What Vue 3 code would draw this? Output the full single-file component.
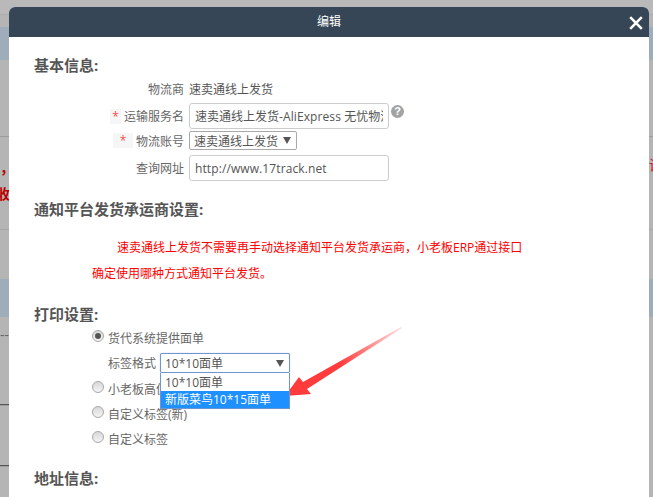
<script setup>
const bgMarks = [
  { text: '，', cls: 'm-comma' },
  { text: '收', cls: 'm-shou' },
  { text: '---', cls: 'm-dash' },
  { text: '一义', cls: 'm-yi' },
  { text: '一任', cls: 'm-ren' },
  { text: '调', cls: 'm-right' },
]
const extraRadios = [
  { label: '小老板高仿真标签', cls: 'r2' },
  { label: '自定义标签(新)', cls: 'r3' },
  { label: '自定义标签', cls: 'r4' },
]
</script>

<template>
  <div class="page">
    <div class="backdrop">
      <div class="strip top"></div>
      <div class="strip blue first"></div>
      <div class="strip line l1"></div>
      <div class="strip line l2"></div>
      <div class="strip blue second"></div>
      <span v-for="m in bgMarks" :key="m.cls" class="mark" :class="m.cls">{{ m.text }}</span>
    </div>

    <section class="modal">
      <header class="head">
        <span class="title">编辑</span>
        <svg class="close" viewBox="0 0 14 14" width="14" height="14">
          <path d="M1.2 1.2 L12.8 12.8 M12.8 1.2 L1.2 12.8" stroke="#fff" stroke-width="2.6" fill="none" />
        </svg>
      </header>

      <div class="body">
        <h3 class="h h1">基本信息:</h3>

        <div class="row info">
          <div class="lab">物流商</div>
          <div class="val">速卖通线上发货</div>
        </div>
        <div class="row svc">
          <div class="lab"><span class="star s1">*</span>运输服务名</div>
          <div class="ctl">
            <div class="input"><div class="clip">速卖通线上发货<span class="latin">-AliExpress </span>无忧物流-标准</div></div>
            <span class="help">?</span>
          </div>
        </div>
        <div class="row acct">
          <div class="lab"><span class="star s2">*</span>物流账号</div>
          <div class="select small">
            <span>速卖通线上发货</span>
            <svg class="tri" viewBox="0 0 8 7" width="8" height="7"><path d="M0 0H8L4 7Z" fill="#555" /></svg>
          </div>
        </div>
        <div class="row url">
          <div class="lab">查询网址</div>
          <div class="input"><div class="clip latin">http://www.17track.net</div></div>
        </div>

        <h3 class="h h2">通知平台发货承运商设置:</h3>
        <p class="red r-a">速卖通线上发货不需要再手动选择通知平台发货承运商，小老板ERP通过接口</p>
        <p class="red r-b">确定使用哪种方式通知平台发货。</p>

        <h3 class="h h3">打印设置:</h3>
        <div class="radio-row r1"><span class="radio on"></span>货代系统提供面单</div>
        <div class="fmt">
          <span class="fmt-lab">标签格式</span>
          <div class="dd">
            <div class="select focus">
              <span>10*10面单</span>
              <svg class="tri" viewBox="0 0 8 7" width="8" height="7"><path d="M0 0H8L4 7Z" fill="#555" /></svg>
            </div>
            <div class="menu">
              <div class="opt first-opt">10*10面单</div>
              <div class="opt sel">新版菜鸟10*15面单</div>
            </div>
          </div>
        </div>
        <div v-for="r in extraRadios" :key="r.cls" class="radio-row" :class="r.cls">
          <span class="radio"></span>{{ r.label }}
        </div>

        <h3 class="h h4">地址信息:</h3>
      </div>
    </section>

    <svg class="arrow" viewBox="0 0 653 497" width="653" height="497">
      <defs>
        <linearGradient id="fade" x1="402" y1="327" x2="340" y2="365" gradientUnits="userSpaceOnUse">
          <stop offset="0" stop-color="#ff3b3b" stop-opacity="0.15" />
          <stop offset="1" stop-color="#ff3b3b" />
        </linearGradient>
      </defs>
      <path d="M285 396 L299 377 L303 382 L401 327 L402 328 L307 389 L311 394 Z" fill="url(#fade)" />
    </svg>
  </div>
</template>

<style>
html, body { margin: 0; background: #b5b5b5; overflow: hidden; }
</style>

<style scoped>
.page {
  position: relative;
  width: 653px;
  height: 497px;
  overflow: hidden;
  font-family: "Open Sans", "Noto Sans CJK SC", sans-serif;
  font-size: 12px;
  color: #666;
}
.backdrop { position: absolute; inset: 0; background: #b5b5b5; }
.strip { position: absolute; left: 0; right: 0; }
.top { top: 0; height: 14px; background: #b9b9b9; border-bottom: 1px solid #adadad; }
.blue { background: #9eadb9; }
.first { top: 27px; height: 33px; }
.second { top: 279px; height: 38px; }
.line { height: 1px; background: #9c9c9c; }
.l1 { top: 136px; }
.l2 { top: 229px; background: #a6a6a6; }
.mark { position: absolute; font-size: 14px; line-height: 16px; white-space: nowrap; }
.m-comma { left: 0; top: 160px; color: #b80000; font-weight: 700; }
.m-shou { left: -4px; top: 186px; color: #b80000; font-weight: 700; }
.m-dash { left: 0; top: 327px; color: #666; }
.m-yi { left: -4px; top: 397px; color: #555; }
.m-ren { left: -4px; top: 458px; color: #555; }
.m-right { left: 649px; top: 157px; color: #c02020; }

.modal {
  position: absolute;
  left: 9px;
  top: 7px;
  width: 640px;
  height: 490px;
  background: #fff;
  border-radius: 6px 6px 0 0;
  overflow: hidden;
}
.head {
  position: relative;
  height: 30px;
  background: #374656;
  display: flex;
  align-items: center;
  justify-content: center;
}
.title { color: #fff; font-size: 12px; line-height: 30px; }
.close { position: absolute; right: 6px; top: 9px; }

.body { padding: 18px 0 0 25px; }
.h {
  margin: 0;
  font-size: 15px;
  line-height: 20px;
  font-weight: 700;
  color: #555;
}
.h2 { margin-top: 18px; }
.h3 { margin-top: 20px; }
.h4 { margin-top: 20px; }

.row { display: grid; grid-template-columns: 150px 1fr; column-gap: 5px; align-items: center; }
.lab { display: flex; justify-content: flex-end; align-items: center; color: #666; white-space: nowrap; }
.info { margin-top: 5px; height: 18px; }
.val { color: #555; }
.svc { margin-top: 5px; height: 26px; }
.acct { margin-top: 2px; height: 19px; }
.url { margin-top: 5px; height: 26px; }
.ctl { display: flex; align-items: flex-start; height: 100%; }

.star {
  background: #f6f6f6;
  color: #f05050;
  text-align: center;
  height: 15px;
  line-height: 16px;
  margin-right: 3px;
}
.s1 { width: 11px; }
.s2 { width: 20px; }

.input {
  box-sizing: border-box;
  width: 200px;
  height: 26px;
  border: 1px solid #ccc;
  border-radius: 3px;
  background: #fff;
  padding: 0 5px;
  line-height: 26px;
  font-size: 12px;
  color: #555;
}
.clip { white-space: nowrap; overflow: hidden; }
.latin { letter-spacing: 0.1px; }
.help {
  width: 13px;
  height: 13px;
  margin: 2px 0 0 2px;
  border-radius: 50%;
  background: #a3a3a3;
  color: #fff;
  font-family: "Liberation Sans", sans-serif;
  font-size: 11px;
  font-weight: 700;
  line-height: 13px;
  text-align: center;
}

.select {
  box-sizing: border-box;
  display: flex;
  align-items: center;
  justify-content: space-between;
  border: 1px solid #a9a9a9;
  border-radius: 2px;
  background: #fff;
  color: #555;
  padding: 0 5px 0 4px;
  white-space: nowrap;
}
.small { width: 108px; height: 19px; }
.focus {
  width: 130px;
  height: 20px;
  border: 1px solid #6f95d0;
  box-shadow: 0 0 1px #7ea6e0;
}

.red { margin: 0; color: #f00; line-height: 20px; white-space: nowrap; }
.r-a { margin-top: 19px; padding-left: 83px; }
.r-b { margin-top: 6px; padding-left: 58px; }

.radio-row {
  display: flex;
  align-items: center;
  height: 18px;
  padding-left: 58px;
  color: #666;
  white-space: nowrap;
}
.r1 { margin-top: 5px; }
.r2 { margin-top: 7px; }
.r3 { margin-top: 7px; }
.r4 { margin-top: 7px; }
.radio {
  box-sizing: border-box;
  width: 12px;
  height: 12px;
  margin-right: 4px;
  margin-bottom: 5px;
  border-radius: 50%;
  border: 1px solid #a8a8a8;
  background: linear-gradient(#d8d8d8, #f4f4f4);
  position: relative;
}
.radio.on::after {
  content: "";
  position: absolute;
  left: 2px;
  top: 2px;
  width: 6px;
  height: 6px;
  border-radius: 50%;
  background: #555;
}

.fmt { margin-top: 6px; display: flex; align-items: center; height: 20px; padding-left: 74px; }
.fmt-lab { width: 52px; flex: none; color: #666; }
.dd { position: relative; width: 130px; height: 20px; }
.menu {
  position: absolute;
  left: 0;
  top: 20px;
  width: 130px;
  height: 36px;
  box-sizing: border-box;
  border: 1px solid #6f95d0;
  border-top: 0;
  background: #fff;
  z-index: 2;
}
.opt { height: 17px; line-height: 17px; padding-left: 4px; color: #555; white-space: nowrap; }
.first-opt { height: 18px; line-height: 20px; }
.opt.sel { background: #1e90ff; color: #fff; }

.arrow { position: absolute; left: 0; top: 0; pointer-events: none; }
</style>
